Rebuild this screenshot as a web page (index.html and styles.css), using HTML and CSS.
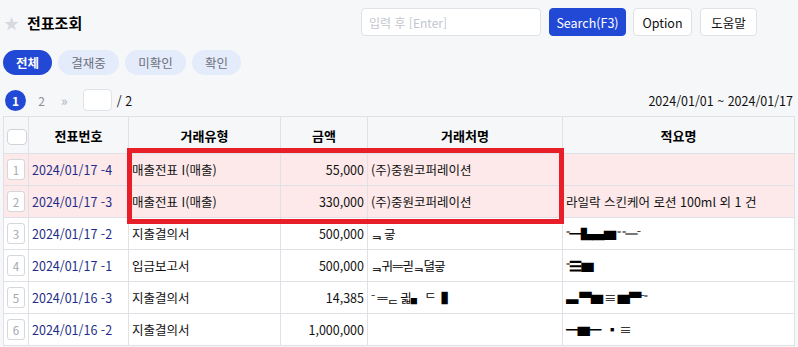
FILE: index.html
```html
<!DOCTYPE html>
<html lang="ko">
<head>
    <meta charset="UTF-8">
    <meta name="viewport" content="width=device-width, initial-scale=1.0">
    <title>전표조회</title>
    <link rel="stylesheet" href="styles.css">
</head>
<body>
    <div class="page">
        <!-- Title and search -->
        <div class="topbar">
            <div class="title">
                <span class="star">★</span>
                <h1>전표조회</h1>
            </div>
            <div class="search">
                <input class="search-input" type="text" placeholder="입력 후 [Enter]">
                <button class="btn btn-primary">Search(F3)</button>
                <button class="btn btn-option">Option</button>
                <button class="btn btn-help">도움말</button>
            </div>
        </div>

        <!-- Status tabs -->
        <div class="tabs">
            <span class="tab tab-short active">전체</span>
            <span class="tab">결재중</span>
            <span class="tab">미확인</span>
            <span class="tab tab-short">확인</span>
        </div>

        <!-- Paging and period -->
        <div class="pager-row">
            <div class="pager">
                <span class="page-num current">1</span>
                <span class="page-num">2</span>
                <span class="page-next">»</span>
                <input class="page-input" type="text">
                <span class="page-total">/ 2</span>
            </div>
            <div class="period">2024/01/01 ~ 2024/01/17</div>
        </div>

        <div class="table-wrap">
            <table class="grid">
                <colgroup>
                    <col class="col-check">
                    <col class="col-no">
                    <col class="col-type">
                    <col class="col-amount">
                    <col class="col-client">
                    <col>
                </colgroup>
                <thead>
                    <tr>
                        <th><span class="checkbox"></span></th>
                        <th>전표번호</th>
                        <th>거래유형</th>
                        <th>금액</th>
                        <th>거래처명</th>
                        <th>적요명</th>
                    </tr>
                </thead>
                <tbody>
                    <tr class="marked">
                        <td><span class="row-num">1</span></td>
                        <td class="doc-no">2024/01/17 -4</td>
                        <td>매출전표 I(매출)</td>
                        <td class="amount">55,000</td>
                        <td>(주)중원코퍼레이션</td>
                        <td></td>
                    </tr>
                    <tr class="marked">
                        <td><span class="row-num">2</span></td>
                        <td class="doc-no">2024/01/17 -3</td>
                        <td>매출전표 I(매출)</td>
                        <td class="amount">330,000</td>
                        <td>(주)중원코퍼레이션</td>
                        <td>라일락 스킨케어 로션 100ml 외 1 건</td>
                    </tr>
                    <tr>
                        <td><span class="row-num">3</span></td>
                        <td class="doc-no">2024/01/17 -2</td>
                        <td>지출결의서</td>
                        <td class="amount">500,000</td>
                        <td class="masked">ᆿ 긓</td>
                        <td class="masked">⁼━▙▄▆ ⁼ ⁼═⁻</td>
                    </tr>
                    <tr>
                        <td><span class="row-num">4</span></td>
                        <td class="doc-no">2024/01/17 -1</td>
                        <td>입금보고서</td>
                        <td class="amount">500,000</td>
                        <td class="masked">ᆿ귀ᆖ긛ᆿ뎔긓</td>
                        <td class="masked">⁼☰▆</td>
                    </tr>
                    <tr>
                        <td><span class="row-num">5</span></td>
                        <td class="doc-no">2024/01/16 -3</td>
                        <td>지출결의서</td>
                        <td class="amount">14,385</td>
                        <td class="masked">⁻ ᆖᆮ 긟▖ ᄃ▐</td>
                        <td class="masked">▃ ▀▆ ≡ ▆▀⁻⁼</td>
                    </tr>
                    <tr>
                        <td><span class="row-num">6</span></td>
                        <td class="doc-no">2024/01/16 -2</td>
                        <td>지출결의서</td>
                        <td class="amount">1,000,000</td>
                        <td></td>
                        <td class="masked">━▆━&nbsp;&nbsp;&nbsp;▪ ≡</td>
                    </tr>
                </tbody>
            </table>
            <!-- highlight annotation over rows 1-2 -->
            <div class="highlight"></div>
        </div>
    </div>
</body>
</html>
```

FILE: styles.css
```css
body {
    margin: 0;
    background-color: #f6f7f9;
    font-family: "Noto Sans CJK KR", "Noto Sans", sans-serif;
    color: #111;
    font-size: 13px;
}
.page {
    padding: 0 3px;
}
.topbar {
    display: flex;
    align-items: center;
    height: 44px;
}
.title {
    display: flex;
    align-items: center;
    gap: 8px;
    padding-left: 1px;
}
.star {
    color: #d7d9de;
    font-size: 15px;
    line-height: 1;
}
.title h1 {
    margin: 0;
    font-size: 15px;
    font-weight: 700;
    color: #000;
}
.search {
    margin-left: auto;
    margin-right: 38px;
    display: flex;
    align-items: center;
    gap: 7px;
}
.search-input {
    width: 180px;
    height: 28px;
    box-sizing: border-box;
    border: 1px solid #dfe2e7;
    border-radius: 4px;
    padding: 0 7px;
    margin-right: 1px;
    font-family: inherit;
    font-size: 12px;
    background: #fff;
}
.search-input::placeholder {
    color: #c2c6cd;
}
.btn {
    height: 28px;
    padding: 0;
    border: 1px solid #dfe2e7;
    border-radius: 4px;
    background: #fff;
    font-family: inherit;
    font-size: 12.5px;
    color: #111;
}
.btn-primary {
    background: #2249d6;
    border-color: #2249d6;
    color: #fff;
    width: 77px;
}
.btn-option {
    width: 59px;
}
.btn-help {
    width: 57px;
    margin-left: 1px;
}
.tabs {
    display: flex;
    gap: 6px;
    margin-top: 6px;
    height: 25px;
}
.tab {
    display: flex;
    align-items: center;
    justify-content: center;
    width: 61px;
    border-radius: 13px;
    background: #e4ebfb;
    color: #6c717b;
    font-size: 12.5px;
}
.tab-short {
    width: 49px;
}
.tab.active {
    background: #2249d6;
    color: #fff;
    font-weight: 700;
}
.pager-row {
    display: flex;
    align-items: center;
    justify-content: space-between;
    margin-top: 14px;
    height: 22px;
}
.pager {
    display: flex;
    align-items: center;
}
.page-num {
    width: 21px;
    height: 21px;
    border-radius: 50%;
    display: flex;
    align-items: center;
    justify-content: center;
    color: #8a8f98;
    font-size: 12px;
    margin-left: 2px;
}
.page-num + .page-num {
    margin-left: 5px;
}
.page-num.current {
    background: #2249d6;
    color: #fff;
    font-weight: 700;
}
.page-next {
    color: #aab0ba;
    margin-left: 9px;
    font-size: 14px;
}
.page-input {
    width: 29px;
    height: 22px;
    box-sizing: border-box;
    border: 1px solid #dfe2e7;
    border-radius: 4px;
    margin-left: 15px;
    background: #fff;
}
.page-total {
    margin-left: 5px;
    font-size: 12.5px;
}
.period {
    font-size: 12.5px;
    margin-right: 2px;
}
.table-wrap {
    position: relative;
    margin-top: 5px;
}
.grid {
    width: 792px;
    border-collapse: collapse;
    background: #fff;
    table-layout: fixed;
}
.grid th, .grid td {
    border: 1px solid #dfe1e6;
    padding: 0 3px;
    white-space: nowrap;
    overflow: hidden;
}
.grid thead tr {
    border-top: 1px solid #c3ccd6;
}
.grid th {
    height: 36px;
    background: #f6f7f9;
    font-size: 13px;
    font-weight: 700;
    color: #000;
}
.grid td {
    height: 31px;
    font-size: 12.5px;
}
.col-check { width: 25px; }
.col-no { width: 100px; }
.col-type { width: 152px; }
.col-amount { width: 87px; }
.col-client { width: 195px; }
.checkbox {
    display: block;
    width: 18px;
    height: 14px;
    border: 1px solid #cfd3d9;
    border-radius: 4px;
    background: #fff;
    margin: 4px 0 0;
}
.row-num {
    display: flex;
    align-items: center;
    justify-content: center;
    width: 16px;
    height: 19px;
    border: 1px solid #d4d7dc;
    border-radius: 3px;
    color: #a3a8b0;
    font-size: 11.5px;
    background: #fff;
}
.doc-no {
    color: #1d2d87;
}
.amount {
    text-align: right;
}
.marked td {
    background: #fde9ea;
}
.masked {
    font-size: 11px;
    letter-spacing: -1px;
    color: #000;
}
.highlight {
    position: absolute;
    left: 124px;
    top: 32px;
    width: 427px;
    height: 66px;
    border: 5px solid #e81f28;
}
```
